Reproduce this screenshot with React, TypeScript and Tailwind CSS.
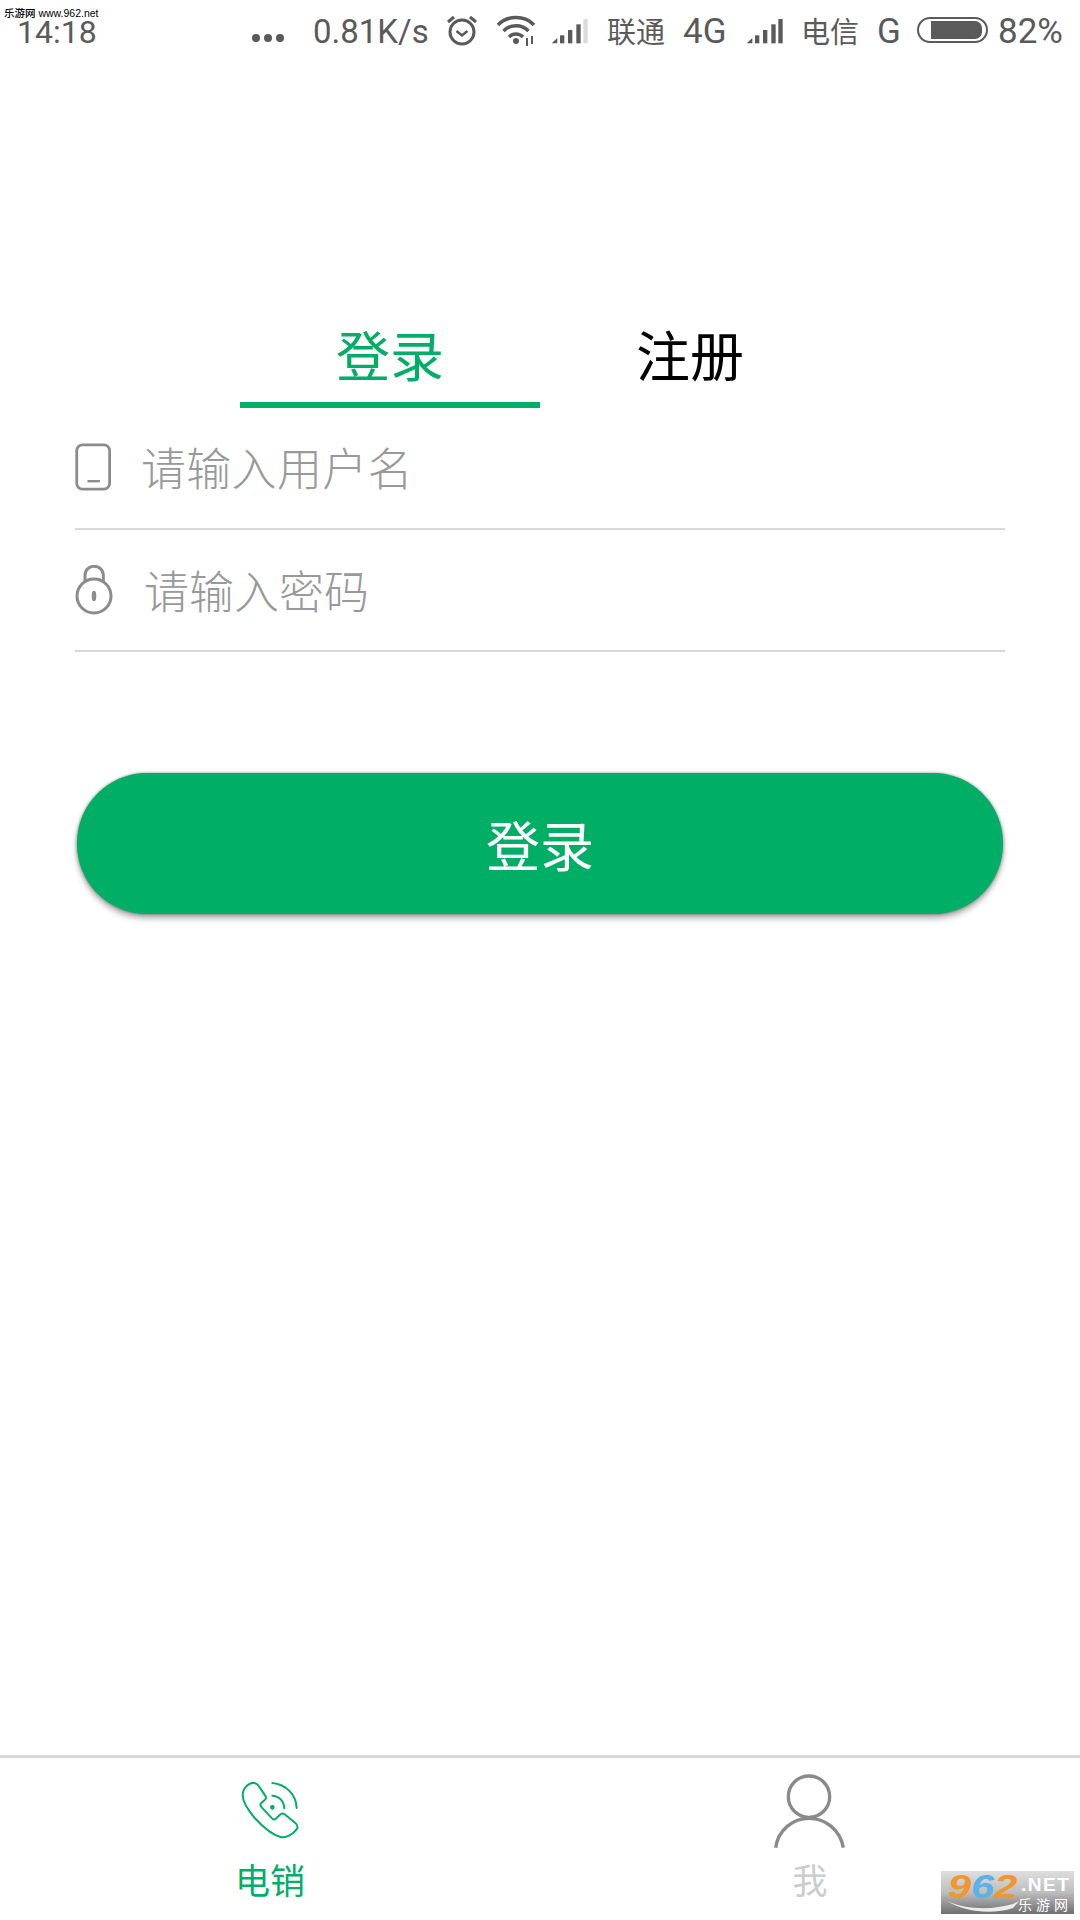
import React from "react";

const cjk = "font-['Noto_Sans_CJK_SC','Noto_Sans',sans-serif]";

function Signal({ full }: { full: boolean }) {
  return (
    <svg width="37" height="26" viewBox="33 52 111 78" className="shrink-0">
      <polygon points="35,128 52,112 52,128" fill="#5a5a5a" />
      <rect x="60" y="104" width="13" height="24" fill="#5a5a5a" />
      <rect x="84" y="88" width="13" height="40" fill="#5a5a5a" />
      <rect x="109" y="71" width="13" height="57" fill="#5a5a5a" />
      <rect x="130" y="55" width="13" height="73" fill={full ? "#5a5a5a" : "#dcdcdc"} />
    </svg>
  );
}

export default function App() {
  return (
    <div className={`relative flex h-[1920px] w-[1080px] flex-col overflow-hidden bg-white ${cjk}`}>
      {/* status bar */}
      <div className="relative flex h-[60px] shrink-0 items-start pt-[14px] text-[#5a5a5a] font-['Roboto',sans-serif] text-[33px] leading-[36px]">
        <span className="absolute left-[4px] top-[6px] text-[10.5px] leading-[14px] font-medium text-black font-['Liberation_Sans','Noto_Sans_CJK_SC',sans-serif]">
          乐游网 www.962.net
        </span>
        <span className="ml-[17px] w-[78px] text-[32px]">14:18</span>
        <svg width="34" height="10" viewBox="0 0 34 10" className="ml-[156px] mt-[19px] shrink-0">
          <circle cx="5" cy="5" r="4" fill="#5a5a5a" />
          <circle cx="17" cy="5" r="4" fill="#5a5a5a" />
          <circle cx="29" cy="5" r="4" fill="#5a5a5a" />
        </svg>
        <span className="ml-[28px] w-[126px] whitespace-nowrap">0.81K/s</span>
        <svg width="34" height="34" viewBox="0 0 34 34" className="ml-[6px] -mt-[1px] shrink-0" fill="none" stroke="#5a5a5a">
          <circle cx="17" cy="19" r="12" strokeWidth="3" />
          <path d="M11.5 18l5.5 4.5 5.5-4.5" strokeWidth="2.5" />
          <path d="M3 9l6-5M31 9l-6-5" strokeWidth="3" />
        </svg>
        <svg width="40" height="34" viewBox="0 0 40 34" className="ml-[17px] shrink-0" fill="none" stroke="#5a5a5a" strokeWidth="3.5">
          <path d="M2 11C11 1 29 1 38 11" />
          <path d="M7.5 17C14 10 26 10 32.5 17" />
          <path d="M13 23c4-4 10-4 14 0" />
          <circle cx="20" cy="27" r="3" fill="#5a5a5a" stroke="none" />
          <path d="M31 24v8M36 22v8" strokeWidth="2" />
        </svg>
        <div className="ml-[15px] mt-[4px] shrink-0"><Signal full={false} /></div>
        <span className={`ml-[19px] -mt-[2px] w-[60px] text-[29px] ${cjk}`}>联通</span>
        <span className="ml-[16px] w-[46px] whitespace-nowrap text-[35px]">4G</span>
        <div className="ml-[17px] mt-[4px] shrink-0"><Signal full /></div>
        <span className={`ml-[18px] -mt-[2px] w-[60px] text-[29px] ${cjk}`}>电信</span>
        <span className="ml-[16px] w-[26px] text-[35px]">G</span>
        <div className="ml-[14px] mt-[3px] flex h-[26px] w-[71px] shrink-0 items-center rounded-full border-2 border-[#5a5a5a] pl-[12px] pr-[4px]">
          <div className="h-[18px] w-full rounded-r-[7px] bg-[#5a5a5a]" />
        </div>
        <span className="ml-[10px] whitespace-nowrap text-[35px]">82%</span>
      </div>

      {/* tabs */}
      <div className="ml-[240px] mt-[258px] flex h-[90px] shrink-0 text-[54px]">
        <div className="flex w-[300px] items-start justify-center border-b-[6px] border-[#00ae66] leading-[72px] text-[#00ae66]">登录</div>
        <div className="flex w-[300px] items-start justify-center leading-[72px] text-black">注册</div>
      </div>

      {/* fields */}
      <div className="mx-[75px] flex h-[122px] shrink-0 items-center border-b-2 border-[#d9d9d9] pb-[2px] text-[45px] font-light text-[#999999]">
        <svg width="36" height="48" viewBox="46 405 104 138" className="shrink-0" fill="none" stroke="#8c8c8c" strokeWidth="8">
          <rect x="51" y="410" width="95" height="128" rx="17" />
          <path d="M82 515h36" strokeWidth="7" />
        </svg>
        <span className="ml-[30px] leading-[60px] tracking-[0.3px]">请输入用户名</span>
      </div>
      <div className="mx-[75px] flex h-[122px] shrink-0 items-center border-b-2 border-[#d9d9d9] text-[45px] font-light text-[#999999]">
        <svg width="38" height="50" viewBox="46 762 114 150" className="shrink-0" fill="none" stroke="#8c8c8c" strokeWidth="9">
          <circle cx="103" cy="855" r="51" />
          <path d="M76 815v-22c0-36 55-36 55 0v22" />
          <ellipse cx="103" cy="855" rx="7" ry="16" fill="#8c8c8c" stroke="none" />
        </svg>
        <span className="ml-[31px] leading-[60px]">请输入密码</span>
      </div>

      {/* button */}
      <div className="mx-[77px] mt-[121px] flex h-[141px] shrink-0 items-center justify-center rounded-[70px] bg-[#00ae66] text-[54px] text-white shadow-[0_4px_6px_rgba(0,0,0,0.35),0_0_3px_rgba(0,0,0,0.4)]">
        登录
      </div>

      <div className="flex-1" />

      {/* bottom nav */}
      <div className="grid h-[165px] shrink-0 grid-cols-2 border-t-[3px] border-[#d9d9d9] text-[35px]">
        <div className="flex flex-col items-center text-[#00ae66]">
          <div className="flex h-[93px] items-start pt-[21px]">
            <svg width="60" height="60" viewBox="120 120 180 180" fill="none" stroke="#00ae66" strokeWidth="6" strokeLinejoin="round" strokeLinecap="round">
              <path d="M160 131c-14 1-32 16-32 38 0 18 16 44 36 68 22 24 50 50 78 57 16 4 38-8 50-26 2-8-1-12-6-16l-33-27c-6-4-10-1-14 3l-11 11c-4 4-8 3-12-1l-31-33c-5-5-5-9-1-13l11-10c3-3 4-6 2-10l-20-30c-3-5-7-9-17-11z" />
              <path d="M217 132c40 4 72 34 73 75" />
              <path d="M217 170c20 1 35 16 36 38" />
              <circle cx="217" cy="205" r="4" fill="#00ae66" />
            </svg>
          </div>
          <div className="h-[56px] leading-[56px]">电销</div>
        </div>
        <div className="flex flex-col items-center text-[#cccccc]">
          <div className="flex h-[93px] items-start pt-[13px]">
            <svg width="80" height="80" viewBox="90 90 240 240" fill="none" stroke="#8a8a8a" strokeWidth="10">
              <circle cx="207" cy="167" r="62" />
              <path d="M107 320C115 265 160 232 207 232C255 232 300 265 310 320" />
            </svg>
          </div>
          <div className="h-[56px] leading-[56px]">我</div>
        </div>
      </div>

      {/* watermark */}
      <div className="absolute left-[941px] top-[1871px] h-[43px] w-[133px] bg-gradient-to-b from-[#dedede] via-[#bdbdbd] to-[#6f6f6f]">
        <span className="absolute left-[7px] top-0 origin-left scale-x-[1.22] whitespace-nowrap text-[34px] leading-[30px] font-bold italic font-['Liberation_Sans',sans-serif]">
          <span className="text-[#f0962c]">9</span><span className="text-[#5cb2e8]">6</span><span className="text-[#f0962c]">2</span>
        </span>
        <span className="absolute left-[80px] top-[5px] whitespace-nowrap text-[19px] leading-[18px] font-bold tracking-[1.5px] text-white font-['Liberation_Sans',sans-serif]">.NET</span>
        <span className="absolute left-[77px] top-[25px] whitespace-nowrap text-[14px] leading-[16px] tracking-[4px] text-white">乐游网</span>
        <svg width="72" height="16" viewBox="0 0 72 16" className="absolute left-[6px] top-[27px]">
          <path d="M0 3C20 12 45 12 66 6L72 3L66 10C45 17 18 14 0 3Z" fill="#ffffff" fillOpacity="0.85" />
        </svg>
      </div>
    </div>
  );
}
